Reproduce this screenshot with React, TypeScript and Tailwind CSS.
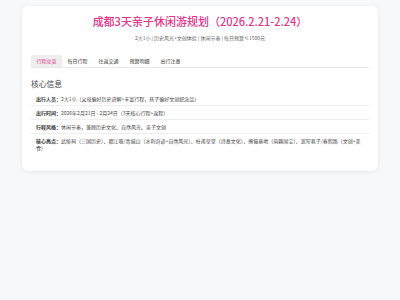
const tabs = ["行程总览", "每日行程", "往返交通", "预算明细", "出行注意"];

const rows = [
  { label: "出行人员：", value: "2大1小（父母偏好历史讲解+丰富行程，孩子偏好文创纪念品）" },
  { label: "出行时间：", value: "2026年2月21日 - 2月24日（3天核心行程+返程）" },
  { label: "行程风格：", value: "休闲节奏，兼顾历史文化、自然风光、亲子文创" },
  {
    label: "核心亮点：",
    value:
      "武侯祠（三国历史）、都江堰/青城山（水利奇迹+自然风光）、杜甫草堂（诗意文化）、熊猫基地（萌趣国宝）、宽窄巷子/春熙路（文创+美食）",
  },
];

export default function App() {
  return (
    <div
      className="min-h-[300px] w-[400px] bg-[#f7f8fa] pt-[6px]"
      style={{ fontFamily: '"Noto Sans CJK SC", "Noto Sans", sans-serif' }}
    >
      <div className="mx-[22px] rounded-[6px] bg-white px-[9px] pt-[8px] pb-[17px] shadow-[0_1px_4px_rgba(0,0,0,0.08)]">
        <h1 className="text-center text-[11px] leading-[14px] font-medium text-[#e3338a]">
          成都3天亲子休闲游规划（2026.2.21-2.24）
        </h1>
        <p className="mt-[6px] text-center text-[5px] leading-[8px] text-[#666]">
          2大1小 | 历史风光+文创体验 | 休闲节奏 | 每日预算≤1500元
        </p>

        <div className="mt-[13px] flex border-b border-[#e8e8e8]">
          {tabs.map((t, i) => (
            <div
              key={t}
              className={`h-[12px] rounded-t-[2px] px-[5.5px] text-[5px] leading-[12px] ${
                i === 0 ? "bg-[#eeeeee] text-[#e3338a]" : "text-[#333]"
              }`}
            >
              {t}
            </div>
          ))}
        </div>

        <h2 className="mt-[10px] text-[7.75px] leading-[11px] text-[#444]">核心信息</h2>

        <div className="mt-[3px]">
          {rows.map((r, i) => (
            <div
              key={r.label}
              className={`px-[5px] py-[3px] text-[5px] leading-[7px] text-[#444] ${
                i < rows.length - 1 ? "border-b border-[#eeeeee]" : ""
              }`}
            >
              <span className="font-bold text-[#333]">{r.label}</span>
              {r.value}
            </div>
          ))}
        </div>
      </div>
    </div>
  );
}
